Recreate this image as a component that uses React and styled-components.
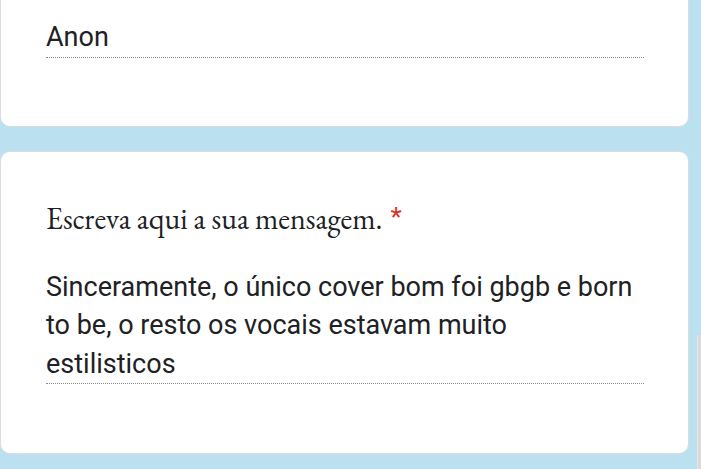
import React from "react";
import styled, { createGlobalStyle } from "styled-components";

const Global = createGlobalStyle`
  html, body {
    margin: 0;
    padding: 0;
    background: #bbe0f0;
    overflow: hidden;
  }
  body {
    font-family: Roboto, "Liberation Sans", sans-serif;
  }
`;

const Page = styled.div`
  display: flex;
  align-items: flex-start;
  gap: 8px;
  width: 701px;
  height: 469px;
  overflow: hidden;
`;

const Column = styled.div`
  display: flex;
  flex-direction: column;
  gap: 24px;
  width: 689px;
  flex-shrink: 0;
  margin-top: -31px;
`;

const Card = styled.section`
  box-sizing: border-box;
  background: #ffffff;
  border: 1px solid #dadce0;
  border-radius: 10px;
  padding: ${(p) => p.$padTop}px 44px ${(p) => p.$padBottom}px 45px;
`;

const Title = styled.h2`
  margin: 0 0 31px 0;
  font-family: "EB Garamond", "Liberation Serif", serif;
  font-weight: 400;
  font-size: 30px;
  line-height: 36px;
  color: #202124;
`;

const Required = styled.span`
  font-family: Roboto, "Liberation Sans", sans-serif;
  font-size: 26px;
  color: #d93025;
  margin-left: 8px;
  vertical-align: top;
  position: relative;
  top: -2px;
`;

const Answer = styled.div`
  font-family: Roboto, "Liberation Sans", sans-serif;
  font-size: 27px;
  line-height: 38.5px;
  color: #202124;
  padding-right: 10px;
  border-bottom: 1px dotted #8c8c8c;
`;

const Strip = styled.div`
  flex-shrink: 0;
  margin-top: 335px;
  width: 12px;
  height: 140px;
  background: #dadada;
  border-left: 1px solid #e8e8e8;
`;

export default function App() {
  return (
    <>
      <Global />
      <Page>
        <Column>
          <Card $padTop={48} $padBottom={68}>
            <Answer>Anon</Answer>
          </Card>
          <Card $padTop={49} $padBottom={69}>
            <Title>
              Escreva aqui a sua mensagem.<Required>*</Required>
            </Title>
            <Answer>
              Sinceramente, o único cover bom foi gbgb e born to be, o resto os
              vocais estavam muito estilisticos
            </Answer>
          </Card>
        </Column>
        <Strip />
      </Page>
    </>
  );
}
